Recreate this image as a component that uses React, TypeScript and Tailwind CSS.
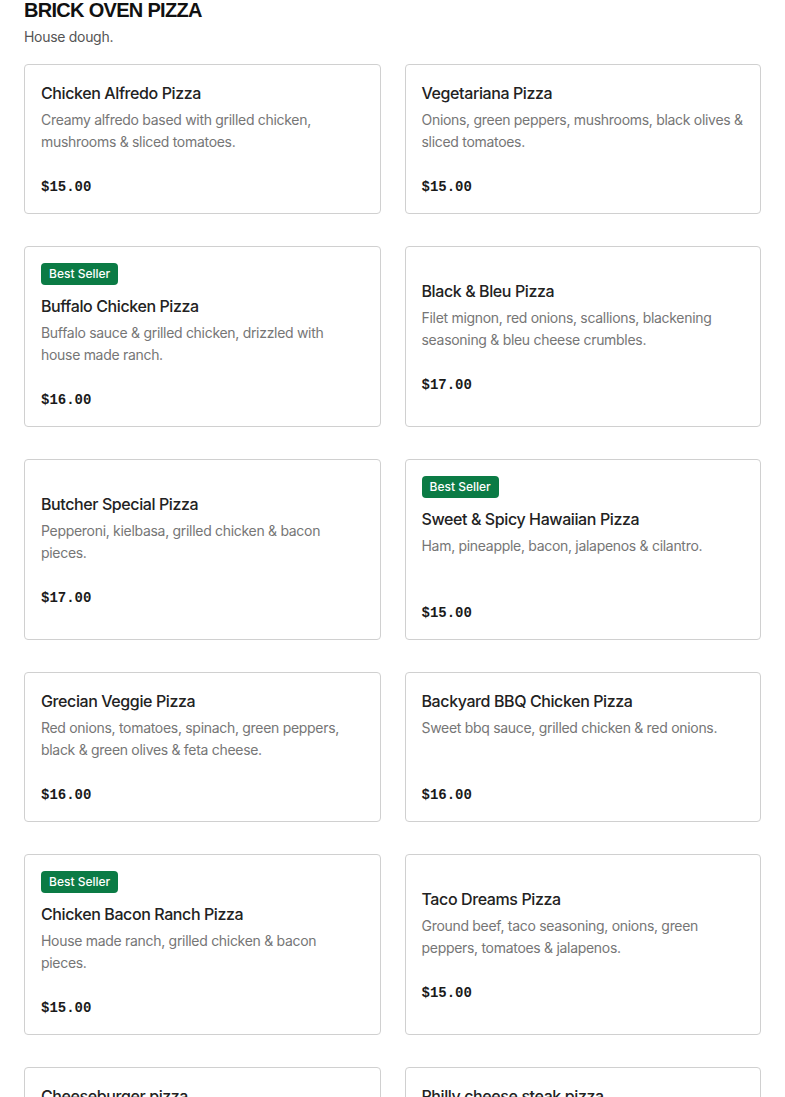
import React from 'react';

interface MenuItem {
  name: string;
  description: string;
  price: string;
  bestSeller?: boolean;
}

const items: MenuItem[] = [
  { name: 'Chicken Alfredo Pizza', description: 'Creamy alfredo based with grilled chicken, mushrooms & sliced tomatoes.', price: '$15.00' },
  { name: 'Vegetariana Pizza', description: 'Onions, green peppers, mushrooms, black olives & sliced tomatoes.', price: '$15.00' },
  { name: 'Buffalo Chicken Pizza', description: 'Buffalo sauce & grilled chicken, drizzled with house made ranch.', price: '$16.00', bestSeller: true },
  { name: 'Black & Bleu Pizza', description: 'Filet mignon, red onions, scallions, blackening seasoning & bleu cheese crumbles.', price: '$17.00' },
  { name: 'Butcher Special Pizza', description: 'Pepperoni, kielbasa, grilled chicken & bacon pieces.', price: '$17.00' },
  { name: 'Sweet & Spicy Hawaiian Pizza', description: 'Ham, pineapple, bacon, jalapenos & cilantro.', price: '$15.00', bestSeller: true },
  { name: 'Grecian Veggie Pizza', description: 'Red onions, tomatoes, spinach, green peppers, black & green olives & feta cheese.', price: '$16.00' },
  { name: 'Backyard BBQ Chicken Pizza', description: 'Sweet bbq sauce, grilled chicken & red onions.', price: '$16.00' },
  { name: 'Chicken Bacon Ranch Pizza', description: 'House made ranch, grilled chicken & bacon pieces.', price: '$15.00', bestSeller: true },
  { name: 'Taco Dreams Pizza', description: 'Ground beef, taco seasoning, onions, green peppers, tomatoes & jalapenos.', price: '$15.00' },
  { name: 'Cheeseburger pizza', description: 'Ground beef, onions, pickles, cheddar & mozzarella cheese.', price: '$16.00' },
  { name: 'Philly cheese steak pizza', description: 'Shaved steak, onions, green peppers & provolone cheese.', price: '$17.00' },
];

function MenuCard({ item }: { item: MenuItem }) {
  return (
    <div className="border border-[#d0d0d0] rounded-[4px] bg-white p-4 flex flex-col justify-center">
      {item.bestSeller && (
        <span className="self-start mb-[9px] h-[22px] leading-[22px] px-2 rounded-[4px] bg-[#0b7b45] text-white text-[12px] font-medium">
          Best Seller
        </span>
      )}
      <div className="text-[16px] leading-6 font-medium text-[#222] mb-1 tracking-[-0.4px]">{item.name}</div>
      <div className="text-[14px] leading-[22px] text-[#767676] min-h-[44px] tracking-[-0.3px]">{item.description}</div>
      <div className="mt-6 text-[14px] leading-5 font-bold text-[#1a1a1a] font-['Liberation_Mono',monospace]">
        {item.price}
      </div>
    </div>
  );
}

export default function App() {
  return (
    <div className="min-h-screen bg-white px-6 font-['Inter','Liberation_Sans',sans-serif]">
      <h2 className="text-[20px] leading-5 font-black tracking-[-0.7px] text-[#111] uppercase font-['Liberation_Sans',Arial,sans-serif]">
        Brick Oven Pizza
      </h2>
      <p className="mt-[6px] text-[14px] leading-[22px] text-[#555] tracking-[-0.3px]">House dough.</p>
      <div className="mt-4 grid grid-cols-2 gap-x-6 gap-y-8 pb-8">
        {items.map((item) => (
          <MenuCard key={item.name} item={item} />
        ))}
      </div>
    </div>
  );
}
